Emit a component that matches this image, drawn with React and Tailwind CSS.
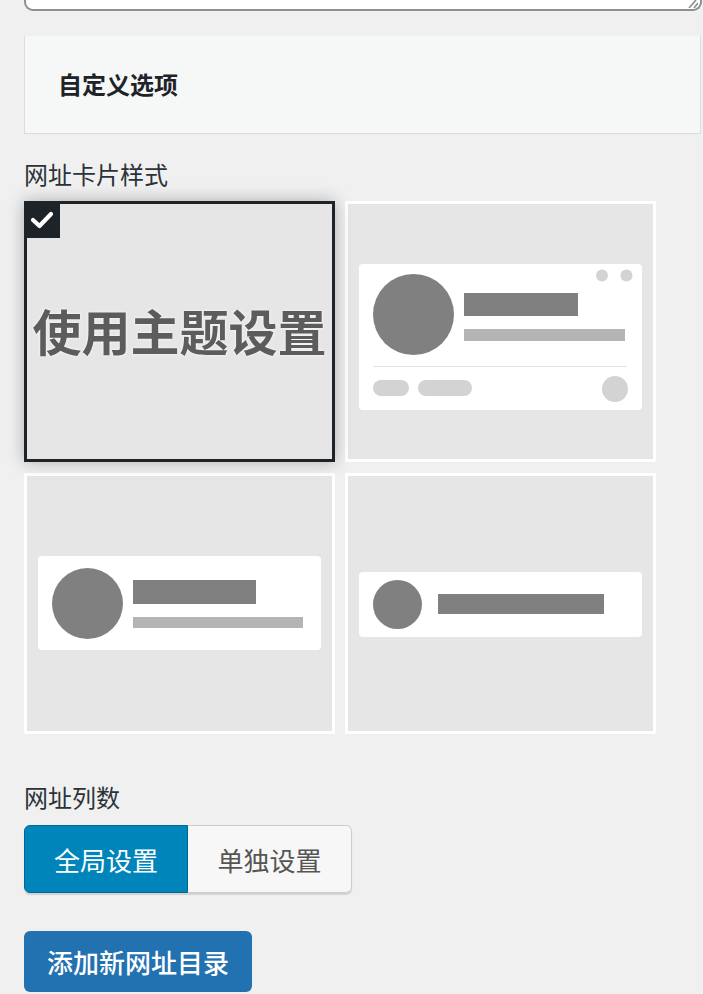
import React from "react";

function Card2() {
  return (
    <svg viewBox="0 0 305 255" className="block h-full w-full">
      <rect x="11" y="60" width="283" height="146" rx="4" fill="#ffffff" />
      <circle cx="65.5" cy="110.5" r="40.5" fill="#808080" />
      <rect x="116" y="89" width="114" height="23" fill="#808080" />
      <rect x="116" y="125" width="161" height="12" fill="#b4b4b4" />
      <circle cx="254" cy="71.5" r="6" fill="#d3d3d3" />
      <circle cx="278.5" cy="71.5" r="6" fill="#d3d3d3" />
      <line x1="25" y1="162.5" x2="279" y2="162.5" stroke="#e4e4e4" strokeWidth="1" />
      <rect x="25" y="176" width="36" height="16" rx="8" fill="#d3d3d3" />
      <rect x="70" y="176" width="54" height="16" rx="8" fill="#d3d3d3" />
      <circle cx="267" cy="185" r="13" fill="#d3d3d3" />
    </svg>
  );
}

function Card3() {
  return (
    <svg viewBox="0 0 305 255" className="block h-full w-full">
      <rect x="11" y="80" width="283" height="94" rx="4" fill="#ffffff" />
      <circle cx="60.5" cy="127.5" r="35.5" fill="#808080" />
      <rect x="106" y="104" width="123" height="24" fill="#808080" />
      <rect x="106" y="141" width="170" height="11" fill="#b4b4b4" />
    </svg>
  );
}

function Card4() {
  return (
    <svg viewBox="0 0 305 255" className="block h-full w-full">
      <rect x="11" y="96" width="283" height="65" rx="4" fill="#ffffff" />
      <circle cx="49.5" cy="128.5" r="24.5" fill="#808080" />
      <rect x="90" y="118" width="166" height="20" fill="#808080" />
    </svg>
  );
}

export default function App() {
  return (
    <div className="min-h-[994px] w-full overflow-hidden bg-[#f0f0f1] font-['Noto_Sans_CJK_SC','Noto_Sans',sans-serif] text-[#2c3338]">
      {/* textarea bottom */}
      <div className="ml-[24px] flex h-[11px] w-[678px] items-end justify-end rounded-b-[9px] border-x-2 border-b-2 border-[#8c8f94] bg-white pr-[2px] pb-[1px]">
        <svg width="16" height="8" viewBox="0 0 16 8">
          <line x1="7" y1="8" x2="14" y2="0" stroke="#8c8f94" strokeWidth="1.6" />
          <line x1="12" y1="8" x2="16" y2="3" stroke="#8c8f94" strokeWidth="1.6" />
        </svg>
      </div>

      {/* panel */}
      <div className="ml-[24px] mt-[25px] flex h-[98px] w-[677px] items-center border-x border-b border-[#dcdcde] bg-[#f6f7f7] pl-[33px] pb-[2px]">
        <span className="text-[24px] font-bold leading-[30px] text-[#1d2327]">自定义选项</span>
      </div>

      {/* card style */}
      <div className="ml-[24px] mt-[25px] text-[24px] leading-[30px] text-[#2c3338]">网址卡片样式</div>
      <div className="ml-[24px] mt-[12px] grid grid-cols-[311px_311px] gap-x-[10px] gap-y-[11px]">
        <div className="relative h-[261px] border-[3px] border-[#1d2327] bg-[#e6e6e6] shadow-[0_0_16px_rgba(0,0,0,0.28)]">
          <div className="flex h-full items-center justify-center pb-[4px]">
            <span className="text-[49px] font-bold leading-none text-[#5c5c5c] [text-shadow:0_0_3px_#ffffff]">
              使用主题设置
            </span>
          </div>
          <div className="absolute left-[-3px] top-[-3px] flex h-[37px] w-[36px] items-center justify-center bg-[#1d2327]">
            <svg width="24" height="20" viewBox="0 0 24 20">
              <polyline points="3,10 9.5,16 21,4" fill="none" stroke="#ffffff" strokeWidth="4.2" strokeLinecap="round" strokeLinejoin="round" />
            </svg>
          </div>
        </div>
        <div className="h-[261px] border-[3px] border-white bg-[#e6e6e6]">
          <Card2 />
        </div>
        <div className="h-[261px] border-[3px] border-white bg-[#e6e6e6]">
          <Card3 />
        </div>
        <div className="h-[261px] border-[3px] border-white bg-[#e6e6e6]">
          <Card4 />
        </div>
      </div>

      {/* columns */}
      <div className="ml-[24px] mt-[48px] text-[24px] leading-[30px] text-[#2c3338]">网址列数</div>
      <div className="ml-[24px] mt-[13px] flex h-[68px] w-[328px] rounded-[6px] shadow-[0_2px_1px_rgba(0,0,0,0.12)]">
        <div className="flex w-[164px] items-center justify-center rounded-l-[6px] border border-[#006799] bg-[#0085ba] text-[26px] text-white">
          全局设置
        </div>
        <div className="flex w-[164px] items-center justify-center rounded-r-[6px] border border-l-0 border-[#cccccc] bg-[#f7f7f7] text-[26px] text-[#555555]">
          单独设置
        </div>
      </div>

      <div className="ml-[24px] mt-[38px] flex h-[61px] w-[228px] items-center justify-center rounded-[6px] bg-[#2271b1] text-[26px] font-medium text-white">
        添加新网址目录
      </div>
    </div>
  );
}
